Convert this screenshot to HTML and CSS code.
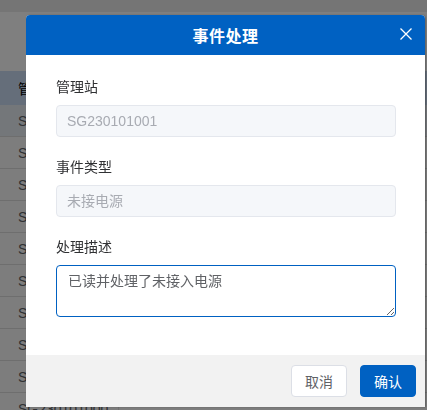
FILE: index.html
```html
<!DOCTYPE html>
<html lang="zh-CN">
<head>
<meta charset="utf-8">
<title>事件处理</title>
<link rel="stylesheet" href="styles.css">
</head>
<body>
<div class="page">
  <div class="topbar"></div>
  <div class="toolbar"></div>
  <div class="table">
    <div class="thead"><span class="cell">管理站</span></div>
    <div class="row hover"><span class="cell">SG230101001</span></div>
    <div class="row"><span class="cell">SG230101002</span></div>
    <div class="row"><span class="cell">SG230101003</span></div>
    <div class="row"><span class="cell">SG230101004</span></div>
    <div class="row"><span class="cell">SG230101005</span></div>
    <div class="row"><span class="cell">SG230101006</span></div>
    <div class="row"><span class="cell">SG230101007</span></div>
    <div class="row"><span class="cell">SG230101008</span></div>
    <div class="row"><span class="cell">SG230101009</span></div>
    <div class="row"><span class="cell">SG230101000</span></div>
  </div>
</div>
<div class="mask"></div>
<div class="dialog">
  <div class="dialog-header">
    <span class="dialog-title">事件处理</span>
    <button class="close" aria-label="关闭">
      <svg width="12" height="12" viewBox="0 0 12 12"><path d="M0.5 0.5 L11.5 11.5 M11.5 0.5 L0.5 11.5" stroke="#fff" stroke-width="1.3" fill="none"/></svg>
    </button>
  </div>
  <div class="dialog-body">
    <div class="form-item">
      <div class="label">管理站</div>
      <div class="input disabled">SG230101001</div>
    </div>
    <div class="form-item">
      <div class="label">事件类型</div>
      <div class="input disabled">未接电源</div>
    </div>
    <div class="form-item">
      <div class="label">处理描述</div>
      <textarea class="textarea">已读并处理了未接入电源</textarea>
    </div>
  </div>
  <div class="dialog-footer">
    <button class="btn">取消</button>
    <button class="btn primary">确认</button>
  </div>
</div>
</body>
</html>
```
FILE: styles.css
```css
html, body {
  margin: 0;
  padding: 0;
  width: 427px;
  height: 410px;
  overflow: hidden;
  font-family: "Liberation Sans", "Noto Sans CJK SC", sans-serif;
  background: #fff;
}
.page {
  display: flex;
  flex-direction: column;
}
.topbar {
  height: 12px;
  background: #ebebeb;
}
.toolbar {
  height: 59px;
  background: #fff;
}
.table {
  display: flex;
  flex-direction: column;
}
.thead {
  height: 34px;
  background: #cbdcf5;
  display: flex;
  align-items: center;
  font-size: 14px;
  color: #000;
}
.row {
  height: 31px;
  border-bottom: 1px solid #dcdcdc;
  display: flex;
  align-items: center;
  font-size: 14px;
  color: #606266;
  background: #fafafa;
}
.row.hover {
  background: #e9eef5;
}
.cell {
  padding-left: 18px;
  width: 100px;
  border-right: 1px solid #e4e4e4;
}
.mask {
  position: fixed;
  inset: 0;
  background: rgba(0, 0, 0, 0.5);
}
.dialog {
  position: fixed;
  left: 26px;
  top: 15px;
  width: 399px;
  height: 392px;
  background: #fff;
  border-radius: 4px 4px 0 0;
  display: flex;
  flex-direction: column;
  box-shadow: 1px 0 2px rgba(0,0,0,0.25);
}
.dialog-header {
  height: 40px;
  background: #0061c2;
  border-radius: 4px 4px 0 0;
  display: flex;
  align-items: center;
  justify-content: center;
  position: relative;
}
.dialog-title {
  color: #fff;
  font-size: 16px;
  font-weight: bold;
  letter-spacing: 0.5px;
}
.close {
  position: absolute;
  right: 13px;
  top: 13px;
  width: 12px;
  height: 12px;
  padding: 0;
  border: 0;
  background: transparent;
  display: flex;
}
.dialog-body {
  padding: 21px 29px 19px 30px;
  flex: 1;
}
.form-item {
  margin-bottom: 19px;
}
.label {
  font-size: 14px;
  line-height: 22px;
  color: #303133;
  margin-bottom: 7px;
}
.input {
  box-sizing: border-box;
  height: 32px;
  border: 1px solid #e4e7ed;
  border-radius: 4px;
  background: #f5f7fa;
  padding: 0 10px;
  font-size: 14px;
  line-height: 30px;
  color: #a8abb2;
}
.textarea {
  display: block;
  box-sizing: border-box;
  width: 100%;
  height: 52px;
  border: 1px solid #0061c2;
  border-radius: 4px;
  padding: 5px 11px;
  font-family: inherit;
  font-size: 14px;
  line-height: 20px;
  color: #606266;
  resize: vertical;
  outline: none;
  margin: 0;
}
.dialog-footer {
  height: 52px;
  box-sizing: border-box;
  background: #f2f2f2;
  display: flex;
  justify-content: flex-end;
  align-items: center;
  gap: 13px;
  padding: 0 9px 0 0;
}
.btn {
  box-sizing: border-box;
  width: 56px;
  height: 32px;
  border: 1px solid #dcdfe6;
  border-radius: 4px;
  background: #fff;
  color: #606266;
  font-family: inherit;
  font-size: 14px;
  padding: 0;
}
.btn.primary {
  background: #0061c2;
  border-color: #0061c2;
  color: #fff;
}
```
